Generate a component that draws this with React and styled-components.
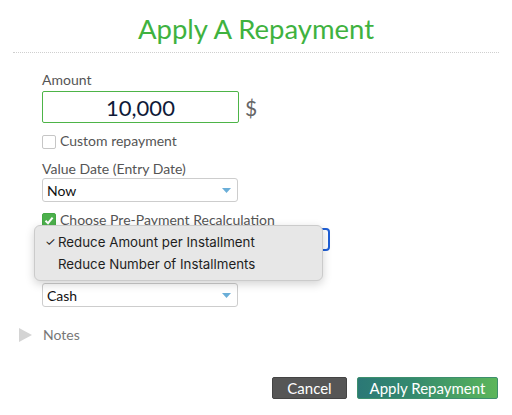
import React from 'react';
import styled, { createGlobalStyle } from 'styled-components';

const GlobalStyle = createGlobalStyle`
  * { box-sizing: border-box; }
  body {
    margin: 0;
    background: #fff;
    font-family: Lato, "Open Sans", sans-serif;
  }
`;

const Page = styled.div`
  width: 512px;
  height: 415px;
  overflow: hidden;
  background: #fff;
`;

const Header = styled.div`
  margin: 0 13px;
  padding: 13px 0 7px;
  border-bottom: 1px dotted #cfcfcf;
  text-align: center;
`;

const Title = styled.h1`
  margin: 0;
  font-size: 27.5px;
  line-height: 32px;
  font-weight: 400;
  color: #3fb23f;
`;

const Form = styled.div`
  padding: 18px 0 0 42px;
  display: flex;
  flex-direction: column;
  align-items: flex-start;
`;

const Label = styled.div`
  margin-top: ${(p) => p.top || 0}px;
  height: 17px;
  font-size: 14px;
  line-height: 17px;
  color: #555;
`;

const AmountRow = styled.div`
  margin-top: 3px;
  display: flex;
  align-items: center;
`;

const AmountInput = styled.div`
  width: 197px;
  height: 32px;
  border: 1px solid #4db447;
  border-radius: 2px;
  display: flex;
  align-items: center;
  justify-content: center;
  font-size: 22px;
  color: #0f1a38;
`;

const Currency = styled.span`
  margin-left: 6px;
  font-size: 21px;
  color: #666;
`;

const CheckRow = styled.div`
  margin-top: ${(p) => p.top}px;
  display: flex;
  align-items: flex-start;
  gap: 4px;
  font-size: 14px;
  line-height: 17px;
  color: #555;
`;

const Box = styled.span`
  width: 14px;
  height: 14px;
  margin-top: ${(p) => p.offset}px;
  border-radius: 2px;
  border: 1px solid ${(p) => (p.checked ? '#45a845' : '#c6c6c6')};
  background: ${(p) => (p.checked ? '#4cb04c' : '#fff')};
  display: flex;
  align-items: center;
  justify-content: center;
`;

const Select = styled.div`
  margin-top: 1px;
  width: 196px;
  height: 24px;
  padding: 0 6px 0 4px;
  border: 1px solid #cdcdcd;
  border-radius: 3px;
  display: flex;
  align-items: center;
  justify-content: space-between;
  font-size: 14px;
  color: #111;
`;

const Arrow = () => (
  <svg width="9" height="5" viewBox="0 0 9 5">
    <path d="M0 0 H9 L4.5 5 Z" fill="#6aaed8" />
  </svg>
);

const FocusWrap = styled.div`
  position: relative;
`;

const FocusSelect = styled.div`
  width: 288px;
  height: 23px;
  border: 2px solid #1f5fd6;
  border-radius: 4px;
`;

const Menu = styled.div`
  position: absolute;
  top: -3px;
  left: -8px;
  width: 289px;
  height: 56px;
  padding: 5px 0 0 10px;
  background: #e7e7e7;
  border: 1px solid #cbcbcb;
  border-radius: 6px;
  box-shadow: 0 3px 10px rgba(0, 0, 0, 0.18);
  font-family: Inter, "Liberation Sans", sans-serif;
  font-size: 13.3px;
  color: #1e1e1e;
`;

const MenuItem = styled.div`
  display: flex;
  height: 22px;
  line-height: 22px;
`;

const Tick = styled.span`
  width: 13px;
  flex: none;
  font-size: 12px;
`;

const NotesRow = styled.div`
  margin: 19px 0 0 19px;
  display: flex;
  align-items: center;
  gap: 11px;
  font-size: 14px;
  line-height: 17px;
  color: #777;
`;

const Footer = styled.div`
  margin-top: 34px;
  padding-right: 14px;
  display: flex;
  justify-content: flex-end;
  gap: 10px;
`;

const Button = styled.button`
  height: 22px;
  width: ${(p) => p.w}px;
  padding: 0;
  border: 1px solid ${(p) => (p.primary ? '#3d8f6d' : '#444')};
  border-radius: 2px;
  background: ${(p) =>
    p.primary ? 'linear-gradient(90deg, #2b7876 0%, #348a6e 40%, #5cb65a 100%)' : '#565656'};
  color: #fff;
  font-family: Lato, sans-serif;
  font-size: 15px;
  line-height: 20px;
`;

export default function App() {
  return (
    <Page>
      <GlobalStyle />
      <Header>
        <Title>Apply A Repayment</Title>
      </Header>

      <Form>
        <Label>Amount</Label>
        <AmountRow>
          <AmountInput>10,000</AmountInput>
          <Currency>$</Currency>
        </AmountRow>

        <CheckRow top={9}>
          <Box offset={3} />
          Custom repayment
        </CheckRow>

        <Label top={11}>Value Date (Entry Date)</Label>
        <Select>
          Now
          <Arrow />
        </Select>

        <CheckRow top={9}>
          <Box offset={2} checked>
            <svg width="10" height="9" viewBox="0 0 10 9">
              <path d="M1.5 4.8 L4 7.2 L8.6 1.6" fill="none" stroke="#fff" strokeWidth="2" />
            </svg>
          </Box>
          Choose Pre-Payment Recalculation
        </CheckRow>

        <FocusWrap>
          <FocusSelect />
          <Menu>
            <MenuItem>
              <Tick>✓</Tick>Reduce Amount per Installment
            </MenuItem>
            <MenuItem>
              <Tick />Reduce Number of Installments
            </MenuItem>
          </Menu>
        </FocusWrap>

        {/* label for the payment method select sits under the open menu */}
        <Label top={14} />
        <Select>
          Cash
          <Arrow />
        </Select>
      </Form>

      <NotesRow>
        <svg width="13" height="14" viewBox="0 0 13 14">
          <path d="M0 0 L13 7 L0 14 Z" fill="#d4d4d4" />
        </svg>
        Notes
      </NotesRow>

      <Footer>
        <Button w={75}>Cancel</Button>
        <Button w={141} primary>Apply Repayment</Button>
      </Footer>
    </Page>
  );
}
